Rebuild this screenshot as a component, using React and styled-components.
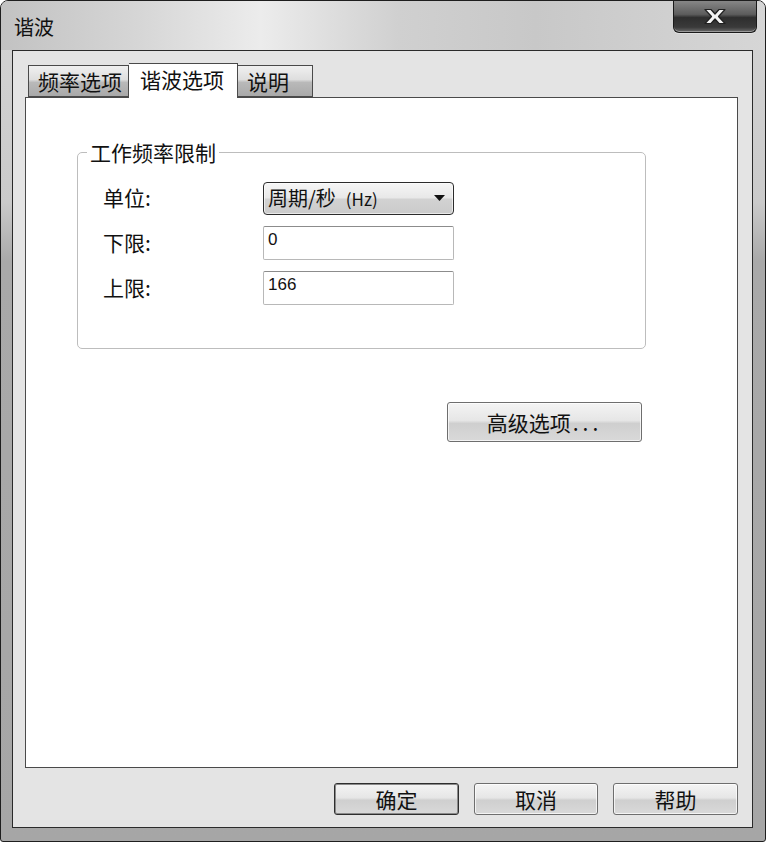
import React from 'react';
import styled, { createGlobalStyle } from 'styled-components';

const GlobalStyle = createGlobalStyle`
    html, body {
        margin: 0;
        padding: 0;
        background: #ffffff;
    }
    * {
        box-sizing: border-box;
    }
`;

const cjk = `"Noto Sans CJK SC", "Noto Sans", sans-serif`;

// Window chrome
const Window = styled.div`
    width: 766px;
    height: 842px;
    display: flex;
    flex-direction: column;
    border: 1px solid #1e1e1e;
    border-radius: 8px 8px 3px 3px;
    background: linear-gradient(to bottom, #d4d4d4 0%, #cacaca 24%, #a9a9a9 31%, #a6a6a6 100%);
    font-family: ${cjk};
    color: #111;
    overflow: hidden;
`;

const TitleBar = styled.div`
    height: 49px;
    flex-shrink: 0;
    display: flex;
    align-items: flex-start;
    justify-content: space-between;
    padding-left: 13px;
    background: linear-gradient(to right, #c2c2c2 0%, #d6d6d6 18%, #ececec 34%, #d0d0d0 52%, #c8c8c8 70%, #d6d6d6 100%);
`;

const Title = styled.div`
    margin-top: 14px;
    font-size: 20px;
    line-height: 24px;
`;

const CloseButton = styled.div`
    width: 84px;
    height: 33px;
    margin-top: -1px;
    margin-right: 8px;
    display: flex;
    align-items: center;
    justify-content: center;
    border: 1px solid #1a1a1a;
    border-top: none;
    border-radius: 0 0 6px 6px;
    background: linear-gradient(to bottom, #8a8a8a 0%, #5c5c5c 45%, #2e2e2e 55%, #3a3a3a 85%, #6a6a6a 100%);
    box-shadow: inset 0 -1px 0 rgba(255, 255, 255, 0.35), 0 1px 0 #e0e0e0;
`;

const Body = styled.div`
    flex: 1;
    display: flex;
    padding: 0 12px 13px 11px;
    min-height: 0;
`;

const Client = styled.div`
    flex: 1;
    display: flex;
    flex-direction: column;
    border: 1px solid #2a2a2a;
    background: #e4e4e4;
    padding: 12px 14px 12px 12px;
`;

// Tabs
const TabStrip = styled.div`
    height: 34px;
    display: flex;
    align-items: flex-end;
    padding-left: 3px;
`;

const Tab = styled.div`
    position: relative;
    z-index: ${({ $active }) => ($active ? 2 : 0)};
    width: ${({ $w }) => $w}px;
    height: ${({ $active }) => ($active ? 35 : 32)}px;
    margin-bottom: ${({ $active }) => ($active ? -1 : 0)}px;
    padding-left: ${({ $active }) => ($active ? 11 : 9)}px;
    font-size: 21px;
    line-height: ${({ $active }) => ($active ? 30 : 31)}px;
    white-space: nowrap;
    border: 1px solid #4a4a4a;
    border-bottom: ${({ $active }) => ($active ? 'none' : '1px solid #4a4a4a')};
    background: ${({ $active }) =>
        $active ? '#ffffff' : 'linear-gradient(to bottom, #f0f0f0 0%, #dedede 45%, #b9b9b9 55%, #a9a9a9 100%)'};
    & + & {
        border-left: ${({ $active }) => ($active ? '1px solid #4a4a4a' : 'none')};
    }
`;

const Panel = styled.div`
    flex: 1;
    position: relative;
    z-index: 1;
    border: 1px solid #4a4a4a;
    background: #ffffff;
    padding: 43px 0 0 51px;
`;

// Group box
const Content = styled.div`
    width: 569px;
    display: flex;
    flex-direction: column;
`;

const Group = styled.fieldset`
    margin: 0;
    padding: 18px 0 43px 0;
    height: 208px;
    border: 1px solid #bdbdbd;
    border-radius: 5px;
`;

const Legend = styled.legend`
    margin-left: 9px;
    padding: 0 3px;
    font-size: 21px;
    line-height: 22px;
`;

const FormGrid = styled.div`
    display: grid;
    grid-template-columns: 160px 191px;
    grid-auto-rows: 34px;
    row-gap: 11px;
    align-items: center;
    margin-left: 25px;
`;

const Label = styled.div`
    font-size: 21px;
    line-height: 24px;
    margin-top: -3px;
`;

const Combo = styled.div`
    height: 33px;
    display: flex;
    align-items: center;
    justify-content: space-between;
    padding: 0 8px 0 4px;
    border: 1px solid #2c2c2c;
    border-radius: 4px;
    background: linear-gradient(to bottom, #f6f6f6 0%, #e8e8e8 48%, #d2d2d2 52%, #cbcbcb 100%);
    box-shadow: inset 0 0 0 1px rgba(255, 255, 255, 0.6);
    font-size: 20px;
    line-height: 24px;
    white-space: nowrap;
`;

const Unit = styled.span`
    margin-left: 10px;
    font-size: 17px;
`;

const Input = styled.div`
    height: 34px;
    padding: 3px 0 0 4px;
    border: 1px solid #b8b8b8;
    border-top-color: #8c8c8c;
    border-radius: 2px;
    background: #ffffff;
    font-family: "Liberation Sans", sans-serif;
    font-size: 17px;
    line-height: 20px;
`;

// Buttons
const BaseButton = styled.div`
    height: ${({ $h }) => $h || 32}px;
    width: ${({ $w }) => $w}px;
    display: flex;
    align-items: center;
    justify-content: center;
    border: 1px solid ${({ $default }) => ($default ? '#2e2e2e' : '#6e6e6e')};
    border-radius: 3px;
    background: linear-gradient(to bottom, #f4f4f4 0%, #e6e6e6 46%, #cfcfcf 54%, #d9d9d9 100%);
    box-shadow: inset 0 0 0 1px ${({ $default }) => ($default ? '#8a8a8a' : 'rgba(255, 255, 255, 0.7)')};
    font-size: 21px;
    line-height: 24px;
    white-space: nowrap;
`;

const AdvancedRow = styled.div`
    display: flex;
    justify-content: flex-end;
    margin-top: 53px;
    padding-right: 4px;
`;

const Dots = styled.span`
    letter-spacing: 4px;
    margin-left: 2px;
`;

const ButtonRow = styled.div`
    display: flex;
    justify-content: flex-end;
    gap: 15px;
    margin-top: 15px;
`;

const CloseGlyph = () => (
    <svg width="26" height="17" viewBox="0 0 26 17">
        <path
            d="M3 1.5 H9 L13 6 L17 1.5 H23 L16.5 8.5 L23 15.5 H17 L13 11 L9 15.5 H3 L9.5 8.5 Z"
            fill="#f4f4f4"
            stroke="#202020"
            strokeWidth="1.2"
            strokeLinejoin="round"
        />
    </svg>
);

const ComboArrow = () => (
    <svg width="11" height="6" viewBox="0 0 11 6">
        <path d="M0 0 H11 L5.5 6 Z" fill="#111" />
    </svg>
);

const tabs = [
    { label: '频率选项', w: 101 },
    { label: '谐波选项', w: 109, active: true },
    { label: '说明', w: 75 },
];

const App = () => (
    <>
        <GlobalStyle />
        <Window>
            <TitleBar>
                <Title>谐波</Title>
                <CloseButton>
                    <CloseGlyph />
                </CloseButton>
            </TitleBar>
            <Body>
                <Client>
                    <TabStrip>
                        {tabs.map((t) => (
                            <Tab key={t.label} $w={t.w} $active={t.active}>
                                {t.label}
                            </Tab>
                        ))}
                    </TabStrip>
                    <Panel>
                        <Content>
                            <Group>
                                <Legend>工作频率限制</Legend>
                                <FormGrid>
                                    <Label>单位:</Label>
                                    <Combo>
                                        <span>
                                            周期/秒<Unit>(Hz)</Unit>
                                        </span>
                                        <ComboArrow />
                                    </Combo>
                                    <Label>下限:</Label>
                                    <Input>0</Input>
                                    <Label>上限:</Label>
                                    <Input>166</Input>
                                </FormGrid>
                            </Group>
                            <AdvancedRow>
                                <BaseButton $w={195} $h={40}>
                                    高级选项<Dots>...</Dots>
                                </BaseButton>
                            </AdvancedRow>
                        </Content>
                    </Panel>
                    <ButtonRow>
                        <BaseButton $w={125} $default>
                            确定
                        </BaseButton>
                        <BaseButton $w={124}>取消</BaseButton>
                        <BaseButton $w={125}>帮助</BaseButton>
                    </ButtonRow>
                </Client>
            </Body>
        </Window>
    </>
);

export default App;
